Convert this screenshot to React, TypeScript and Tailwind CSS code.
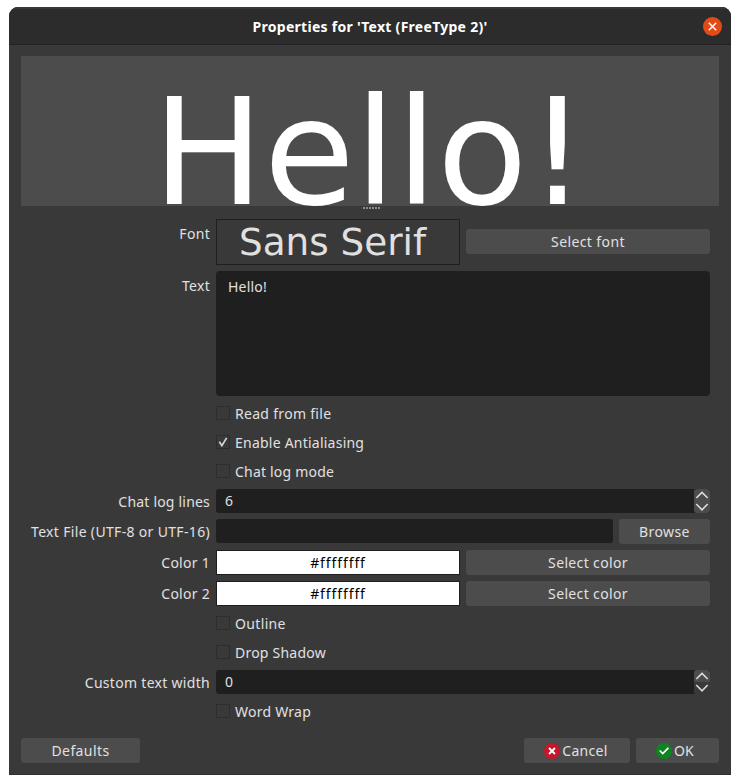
import React from "react";

type TextProps = { children: React.ReactNode; className?: string };

const Label = ({ children, className = "" }: TextProps) => (
  <div className={`mr-[6px] w-[201px] shrink-0 text-right whitespace-nowrap ${className}`}>{children}</div>
);

const Button = ({ children, className = "" }: TextProps) => (
  <button
    className={`flex h-[25px] shrink-0 items-center justify-center rounded-[3px] bg-[#4c4c4c] whitespace-nowrap ${className}`}
  >
    {children}
  </button>
);

function Check({ label, checked = false, className = "" }: { label: string; checked?: boolean; className?: string }) {
  return (
    <label className="ml-[207px] flex h-[23px] items-center">
      <span className="mb-px flex h-[14px] w-[14px] shrink-0 items-center justify-center border border-[#2d2d2d]">
        {checked && (
          <svg width="10" height="10" viewBox="0 0 10 10" fill="none" stroke="#d6d6d6" strokeWidth="1.7">
            <path d="M1.3 4.8 3.9 8.6 8.6 0.9" />
          </svg>
        )}
      </span>
      <span className={`ml-[5px] whitespace-nowrap ${className}`}>{label}</span>
    </label>
  );
}

function SpinRow({
  label,
  value,
  atMinimum = false,
  className = "",
}: {
  label: string;
  value: string;
  atMinimum?: boolean;
  className?: string;
}) {
  return (
    <div className="flex h-6 items-center">
      <Label className={`pt-[2px] ${className}`}>{label}</Label>
      <div className="flex h-6 w-[494px] overflow-hidden rounded-[3px] bg-[#1f1f1f]">
        <div className="flex-1 pl-[9px] leading-[23px]">{value}</div>
        <div className="w-4 overflow-hidden rounded-[3px] bg-[#4c4c4c]">
          {atMinimum && <div className="mt-3 -mb-6 h-3 bg-[#393939]" />}
          <svg className="relative" width="16" height="24" viewBox="0 0 16 24" fill="none" stroke="#dadada" strokeWidth="1.6">
            <path d="M2.3 9 8 3.4 13.7 9M2.3 15 8 20.8 13.7 15" />
          </svg>
        </div>
      </div>
    </div>
  );
}

function ColorRow({ label }: { label: string }) {
  return (
    <div className="flex h-[25px] items-center">
      <Label className="tracking-[0.27px]">{label}</Label>
      <div className="flex h-[25px] w-[244px] items-center justify-center border border-[#1f1f1f] bg-white text-black">
        <span className="tracking-[0.9px]">#ffffffff</span>
      </div>
      <Button className="ml-1.5 w-[244px] tracking-[0.35px]">Select color</Button>
    </div>
  );
}

export default function App() {
  return (
    <div className="h-[784px] w-[740px] bg-white pt-[7px] pl-[9px] font-['Noto_Sans',sans-serif] text-[14px] leading-[20px] text-[#e1e0e1]">
      <div className="h-[768px] w-[722px] overflow-hidden rounded-t-[9px] border-b border-[#303030] bg-[#393939]">
        <header className="grid h-[38px] grid-cols-[40px_1fr_40px] items-center border-t-2 border-b border-t-[#373737] border-b-[#222222] bg-[#2c2c2c]">
          <span />
          <h1 className="pt-px text-center text-[14px] font-bold tracking-[0.28px] whitespace-nowrap text-white">
            Properties for &apos;Text (FreeType 2)&apos;
          </h1>
          <button className="ml-[11.5px] flex h-[19px] w-[19px] items-center justify-center rounded-full bg-[#e24b18]">
            <svg width="9" height="9" viewBox="0 0 9 9" fill="none" stroke="#fff" strokeWidth="1.5">
              <path d="M.8.8 8.2 8.2M8.2.8.8 8.2" />
            </svg>
          </button>
        </header>

        <section className="mx-3 mt-[11px] h-[150px] overflow-hidden bg-[#4c4c4c] pt-[24px] pl-[131.5px] font-['DejaVu_Sans',sans-serif] text-[148px] leading-[146px] whitespace-nowrap text-white">
          Hello!
        </section>
        <div className="flex h-[13px] justify-center gap-px pt-[1px] pl-[2px]">
          {[0, 1, 2, 3, 4, 5].map((dot) => (
            <span key={dot} className="h-[2px] w-[2px] bg-[#8c8c8c]" />
          ))}
        </div>

        <main className="flex flex-col gap-1.5">
          <div className="flex h-[46px] items-start">
            <Label className="pt-[5px] tracking-[0.3px]">Font</Label>
            <div className="h-[46px] w-[244px] border border-[#1f1f1f] pl-[22px] font-['DejaVu_Sans',sans-serif] text-[37.33px] leading-[45px] whitespace-nowrap">
              Sans Serif
            </div>
            <Button className="mt-[10px] ml-1.5 w-[244px] tracking-[0.4px]">Select font</Button>
          </div>
          <div className="flex h-[125px]">
            <Label className="pt-[5px] tracking-[0.3px]">Text</Label>
            <div className="w-[494px] rounded-[4px] bg-[#1f1f1f] pt-[6px] pl-[12px] tracking-[0.2px]">Hello!</div>
          </div>
          <Check label="Read from file" className="tracking-[0.3px]" />
          <Check label="Enable Antialiasing" checked className="tracking-[0.23px]" />
          <Check label="Chat log mode" className="tracking-[0.2px]" />
          <SpinRow label="Chat log lines" value="6" className="tracking-[0.2px]" />
          <div className="flex h-[25px] items-start">
            <Label className="pt-[3px] tracking-[0.33px]">Text File (UTF-8 or UTF-16)</Label>
            <div className="h-6 w-[397px] rounded-[3px] bg-[#1f1f1f]" />
            <Button className="ml-1.5 w-[91px] tracking-[0.4px]">Browse</Button>
          </div>
          <ColorRow label="Color 1" />
          <ColorRow label="Color 2" />
          <Check label="Outline" className="tracking-[0.35px]" />
          <Check label="Drop Shadow" className="tracking-[0.22px]" />
          <SpinRow label="Custom text width" value="0" atMinimum className="tracking-[0.3px]" />
          <Check label="Word Wrap" className="tracking-[0.25px]" />
        </main>

        <footer className="mx-3 mt-[15px] flex gap-1.5">
          <Button className="w-[119px] tracking-[0.4px]">Defaults</Button>
          <span className="flex-1" />
          <Button className="w-[106px] gap-[2px] tracking-[0.3px]">
            <svg width="16" height="16" viewBox="0 0 16 16" fill="none" className="-ml-[2px]">
              <circle cx="8" cy="8" r="8" fill="#c7162b" />
              <path d="m5 5 6 6m0-6-6 6" stroke="#fff" strokeWidth="1.8" />
            </svg>
            Cancel
          </Button>
          <Button className="w-[83px] gap-[2px] tracking-[0.3px]">
            <svg width="16" height="16" viewBox="0 0 16 16" fill="none" className="-ml-[5px]">
              <circle cx="8" cy="8" r="8" fill="#0e8420" />
              <path d="m3.7 7.5 3 3 5.7-5.7" stroke="#fff" strokeWidth="1.7" />
            </svg>
            OK
          </Button>
        </footer>
      </div>
    </div>
  );
}
